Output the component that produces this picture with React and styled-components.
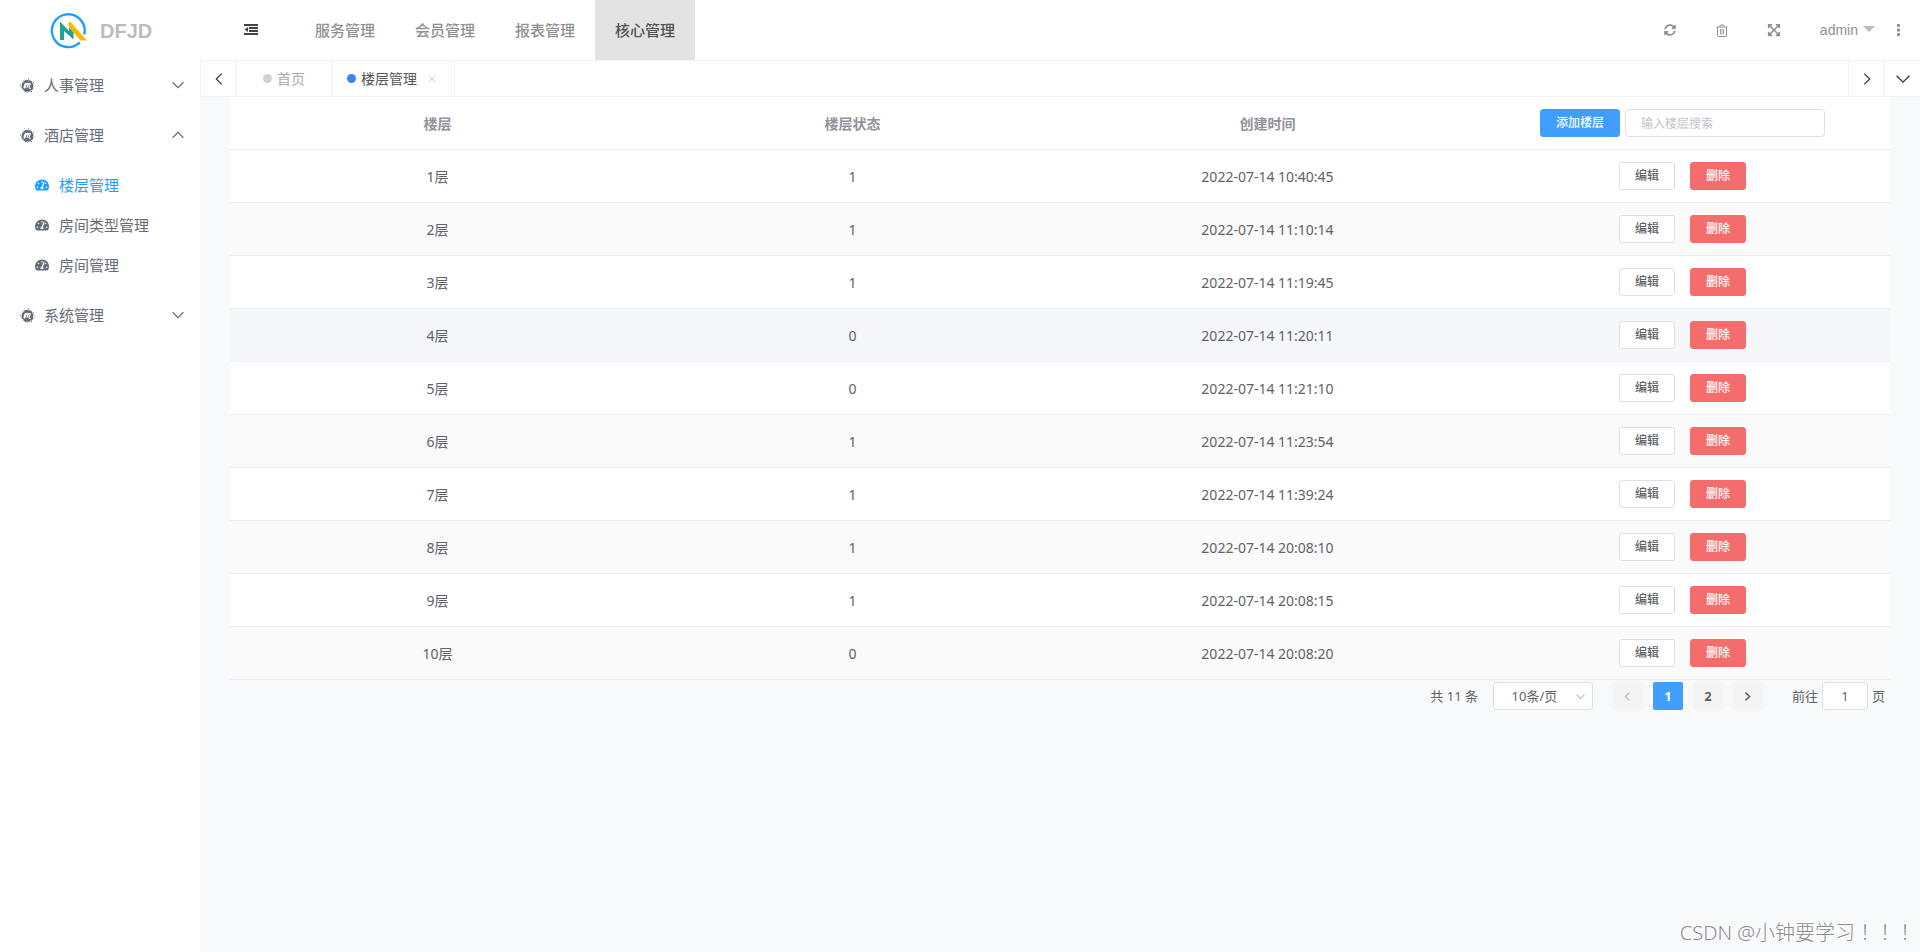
import React, { useState } from 'react';
import styled, { createGlobalStyle, css } from 'styled-components';
import { FaExpandArrowsAlt, FaMeetup, FaSyncAlt, FaTachometerAlt } from 'react-icons/fa';

const navItems = ['服务管理', '会员管理', '报表管理', '核心管理'];

const menus = [
  { title: '人事管理', children: [] },
  { title: '酒店管理', children: ['楼层管理', '房间类型管理', '房间管理'] },
  { title: '系统管理', children: [] },
];

const floors = [
  { id: 1, name: '1层', status: 1, created: '2022-07-14 10:40:45' },
  { id: 2, name: '2层', status: 1, created: '2022-07-14 11:10:14' },
  { id: 3, name: '3层', status: 1, created: '2022-07-14 11:19:45' },
  { id: 4, name: '4层', status: 0, created: '2022-07-14 11:20:11' },
  { id: 5, name: '5层', status: 0, created: '2022-07-14 11:21:10' },
  { id: 6, name: '6层', status: 1, created: '2022-07-14 11:23:54' },
  { id: 7, name: '7层', status: 1, created: '2022-07-14 11:39:24' },
  { id: 8, name: '8层', status: 1, created: '2022-07-14 20:08:10' },
  { id: 9, name: '9层', status: 1, created: '2022-07-14 20:08:15' },
  { id: 10, name: '10层', status: 0, created: '2022-07-14 20:08:20' },
];

export default function App() {
  return (
    <>
      <GlobalStyle />
      <Shell>
        <Sidebar />
        <Main>
          <TopBar />
          <TabBar />
          <Content>
            <FloorTable />
            <Pager />
          </Content>
        </Main>
        <Watermark>CSDN @小钟要学习！！！</Watermark>
      </Shell>
    </>
  );
}

function Sidebar() {
  const [opened, setOpened] = useState('酒店管理');
  const [current, setCurrent] = useState('楼层管理');

  return (
    <Aside>
      <Brand>
        <Logo />
        <BrandName>DFJD</BrandName>
      </Brand>
      <nav>
        {menus.map(({ title, children }) => (
          <div key={title}>
            <MenuTitle
              type="button"
              aria-expanded={opened === title}
              onClick={() => setOpened(opened === title ? '' : title)}
            >
              <FaMeetup size={15} />
              <MenuText>{title}</MenuText>
              <Chevron dir={opened === title ? 'up' : 'down'} width={12} />
            </MenuTitle>
            {opened === title && children.length > 0 && (
              <SubMenu>
                {children.map(child => (
                  <li key={child}>
                    <SubLink
                      href="#"
                      $active={child === current}
                      onClick={() => setCurrent(child)}
                    >
                      <FaTachometerAlt size={14} />
                      {child}
                    </SubLink>
                  </li>
                ))}
              </SubMenu>
            )}
          </div>
        ))}
      </nav>
    </Aside>
  );
}

function TopBar() {
  return (
    <Header>
      <FoldButton type="button" aria-label="折叠菜单">
        <FoldIcon />
      </FoldButton>
      <Nav>
        {navItems.map(item => (
          <NavLink key={item} href="#" $active={item === '核心管理'}>
            {item}
          </NavLink>
        ))}
      </Nav>
      <Tools>
        <ToolButton type="button" aria-label="刷新">
          <FaSyncAlt size={12} />
        </ToolButton>
        <ToolButton type="button" aria-label="清除缓存">
          <TrashIcon />
        </ToolButton>
        <ToolButton type="button" aria-label="全屏">
          <FaExpandArrowsAlt size={14} />
        </ToolButton>
        <UserButton type="button">
          admin
          <UserCaret />
        </UserButton>
        <MoreButton type="button" aria-label="更多">
          <MoreIcon />
        </MoreButton>
      </Tools>
    </Header>
  );
}

function TabBar() {
  return (
    <Tabs>
      <TabArrow type="button" aria-label="向左">
        <Chevron dir="left" width={12} stroke="#333" />
      </TabArrow>
      <Tab>
        <Dot />
        <TabLink href="#">首页</TabLink>
      </Tab>
      <Tab $active>
        <Dot $active />
        <TabLink href="#">楼层管理</TabLink>
        <CloseButton type="button" aria-label="关闭">
          <svg width="8" height="8" viewBox="0 0 8 8" stroke="currentColor">
            <path d="M.5.5l7 7M7.5.5l-7 7" />
          </svg>
        </CloseButton>
      </Tab>
      <TabSpace />
      <TabArrow type="button" aria-label="向右" $right>
        <Chevron dir="right" width={12} stroke="#333" />
      </TabArrow>
      <TabArrow type="button" aria-label="标签操作" $right>
        <Chevron dir="down" width={14} stroke="#333" />
      </TabArrow>
    </Tabs>
  );
}

function FloorTable() {
  return (
    <Table>
      <thead>
        <tr>
          <HeadCell>楼层</HeadCell>
          <HeadCell>楼层状态</HeadCell>
          <HeadCell>创建时间</HeadCell>
          <HeadCell>
            <Actions $gap="5px">
              <Button type="button" $kind="primary">
                添加楼层
              </Button>
              <SearchInput aria-label="输入楼层搜索" placeholder="输入楼层搜索" />
            </Actions>
          </HeadCell>
        </tr>
      </thead>
      <tbody>
        {floors.map(floor => (
          <Row key={floor.id} $current={floor.id === 4}>
            <Cell>{floor.name}</Cell>
            <Cell>{floor.status}</Cell>
            <Cell>{floor.created}</Cell>
            <Cell>
              <Actions $gap="15px">
                <Button type="button">编辑</Button>
                <Button type="button" $kind="danger">
                  删除
                </Button>
              </Actions>
            </Cell>
          </Row>
        ))}
      </tbody>
    </Table>
  );
}

function Pager() {
  const [page, setPage] = useState(1);

  return (
    <Pagination>
      <span>共 11 条</span>
      <SizeBox>
        <SizeSelect aria-label="每页条数" defaultValue="10">
          <option value="10">10条/页</option>
          <option value="20">20条/页</option>
        </SizeSelect>
        <SizeArrow>
          <Chevron dir="down" width={9} stroke="#c0c4cc" />
        </SizeArrow>
      </SizeBox>
      <Pages>
        <PageButton
          type="button"
          aria-label="上一页"
          disabled={page === 1}
          onClick={() => setPage(1)}
        >
          <Chevron dir="left" width={9} weight={1.5} />
        </PageButton>
        {[1, 2].map(n => (
          <PageButton key={n} type="button" $active={n === page} onClick={() => setPage(n)}>
            {n}
          </PageButton>
        ))}
        <PageButton
          type="button"
          aria-label="下一页"
          disabled={page === 2}
          onClick={() => setPage(2)}
        >
          <Chevron dir="right" width={9} weight={1.5} />
        </PageButton>
      </Pages>
      <Jump>
        前往
        <JumpInput defaultValue="1" />
        页
      </Jump>
    </Pagination>
  );
}

const turns = { down: 0, left: 90, up: 180, right: 270 };

function Chevron({ dir, width, stroke = 'currentColor', weight = 1.2 }) {
  return (
    <svg width={width} height={width} viewBox={`0 0 ${width} ${width}`} fill="none" aria-hidden="true">
      <path
        d={`M.6 ${width * 0.27}L${width / 2} ${width * 0.73}L${width - 0.6} ${width * 0.27}`}
        stroke={stroke}
        strokeWidth={weight}
        transform={`rotate(${turns[dir]} ${width / 2} ${width / 2})`}
      />
    </svg>
  );
}

function Logo() {
  return (
    <svg width="38" height="36" viewBox="0 0 38 36" fill="none" aria-hidden="true">
      <path d="M34.2 21.5A16.4 16.4 0 1 0 29.8 29.3" stroke="#1e9fff" strokeWidth="2.4" />
      <path d="M18.500 9h2L37 27.500h-6.500L18.500 14z" fill="#ffb800" />
      <path d="M10 8.500l9 9.500v-3.500l4.500 5v7L14 18v9h-4z" fill="#1fa193" />
    </svg>
  );
}

function FoldIcon() {
  return (
    <svg width="14" height="12" viewBox="0 0 14 12" fill="currentColor" aria-hidden="true">
      <path d="M0 0h14v2H0zM5 3h9v2H5zM5 6h9v2H5zM0 9h14v2H0zM4 3v5L.5 5.500z" />
    </svg>
  );
}

function TrashIcon() {
  return (
    <svg width="12" height="13" viewBox="0 0 12 13" fill="none" stroke="currentColor" aria-hidden="true">
      <path d="M.5 3h11M4 2.800V1.800Q4 1 4.800 1h2.400Q8 1 8 1.800v1M1.500 3v8.500q0 1 1 1h7q1 0 1-1V3" />
      <path d="M4.500 5v5.500M6 5v5.500M7.500 5v5.500" strokeWidth=".8" />
    </svg>
  );
}

function MoreIcon() {
  return (
    <svg width="3" height="12" viewBox="0 0 3 12" fill="currentColor" aria-hidden="true">
      <rect width="3" height="3" rx=".5" />
      <rect y="4.500" width="3" height="3" rx=".5" />
      <rect y="9" width="3" height="3" rx=".5" />
    </svg>
  );
}

const GlobalStyle = createGlobalStyle`
  * {
    box-sizing: border-box;
  }

  body {
    margin: 0;
    background: #f8f9fb;
    color: #606266;
    font: 14px/23px 'Noto Sans', 'Noto Sans CJK SC', sans-serif;
  }

  button,
  input,
  select {
    margin: 0;
    font-family: inherit;
  }

  a {
    color: inherit;
    text-decoration: none;
  }

  svg {
    display: block;
    flex: none;
  }
`;

const plainButton = css`
  display: flex;
  align-items: center;
  justify-content: center;
  padding: 0;
  border: none;
  background: none;
  color: inherit;
  cursor: pointer;
`;

const Shell = styled.div`
  position: relative;
  display: grid;
  grid-template-columns: 200px 1fr;
  min-height: 100vh;
`;

const Aside = styled.aside`
  background: #fff;
  color: #666c76;
`;

const Brand = styled.div`
  display: flex;
  align-items: center;
  gap: 12px;
  height: 60px;
  padding: 2px 0 0 50px;
`;

const BrandName = styled.span`
  color: #bfbbbb;
  font: bold 20px 'Liberation Sans', sans-serif;
`;

const MenuTitle = styled.button`
  ${plainButton}
  width: 100%;
  height: 50px;
  padding: 0 16px 0 20px;
  font-size: 15px;
`;

const MenuText = styled.span`
  flex: 1;
  padding: 0 0 2px 9px;
  text-align: left;
`;

const SubMenu = styled.ul`
  margin: 0;
  padding: 5px 0;
  list-style: none;
`;

const SubLink = styled.a`
  display: flex;
  align-items: center;
  gap: 10px;
  height: 40px;
  padding-left: 35px;
  color: ${props => (props.$active ? '#1e9fff' : 'inherit')};
  font-size: 15px;
`;

const Main = styled.main`
  min-width: 0;
`;

const Header = styled.header`
  display: flex;
  height: 60px;
  background: #fff;
  color: #909090;
`;

const FoldButton = styled.button`
  ${plainButton}
  width: 95px;
  padding-left: 7px;
  color: #444;
`;

const Nav = styled.nav`
  display: flex;
`;

const NavLink = styled.a`
  padding: 0 20px;
  background: ${props => (props.$active ? '#e3e3e3' : 'none')};
  color: ${props => (props.$active ? '#505050' : 'inherit')};
  font-size: 15px;
  font-weight: 500;
  line-height: 60px;
`;

const Tools = styled.div`
  display: flex;
  margin-left: auto;
`;

const ToolButton = styled.button`
  ${plainButton}
  width: 52px;
`;

const UserButton = styled.button`
  ${plainButton}
  gap: 5px;
  padding: 0 1px 0 20px;
  font-family: 'Liberation Sans', sans-serif;
  font-size: 14px;
`;

const UserCaret = styled.span`
  margin-bottom: 2px;
  border: 6px solid transparent;
  border-top-color: #bbb;
  border-bottom-width: 0;
`;

const MoreButton = styled.button`
  ${plainButton}
  width: 44px;
`;

const Tabs = styled.div`
  display: flex;
  height: 37px;
  border: solid #f2f2f2;
  border-width: 1px 0 1px 1px;
  background: #fff;
`;

const TabArrow = styled.button`
  ${plainButton}
  width: 36px;
  border: solid #f2f2f2;
  border-width: ${props => (props.$right ? '0 0 0 1px' : '0 1px 0 0')};
`;

const Tab = styled.div`
  display: flex;
  align-items: center;
  gap: 5px;
  padding: ${props => (props.$active ? '0 18px 0 15px' : '0 26px')};
  border-right: 1px solid #f2f2f2;
  color: ${props => (props.$active ? '#555' : '#aaa')};
`;

const TabLink = styled.a`
  line-height: 34px;
`;

const Dot = styled.span`
  width: 9px;
  height: 9px;
  border-radius: 50%;
  background: ${props => (props.$active ? '#4080ff' : '#d2d2d2')};
`;

const CloseButton = styled.button`
  ${plainButton}
  padding-left: 6px;
  color: #ccc;
`;

const TabSpace = styled.div`
  flex: 1;
`;

const Content = styled.section`
  padding: 0 30px;
`;

const Table = styled.table`
  width: 100%;
  table-layout: fixed;
  border-collapse: separate;
  border-spacing: 0;
  background: #fff;
  text-align: center;
`;

const cell = css`
  height: 53px;
  padding: 12px 10px;
  border-bottom: 1px solid #ebeef5;
`;

const HeadCell = styled.th`
  ${cell}
  color: #909399;
`;

const Cell = styled.td`
  ${cell}
`;

const Row = styled.tr`
  &:nth-child(even) {
    background: ${props => (props.$current ? '#f5f7fa' : '#fafafa')};
  }
`;

const Actions = styled.div`
  display: flex;
  justify-content: center;
  gap: ${props => props.$gap};
`;

const kinds = {
  primary: css`
    border-color: #409eff;
    background: #409eff;
    color: #fff;
  `,
  danger: css`
    border-color: #f56c6c;
    background: #f56c6c;
    color: #fff;
  `,
};

const Button = styled.button`
  height: 28px;
  padding: 0 15px;
  border: 1px solid #dcdfe6;
  border-radius: 3px;
  background: #fff;
  color: #606266;
  font-size: 12px;
  font-weight: 500;
  line-height: 12px;
  cursor: pointer;
  ${props => kinds[props.$kind]}
`;

const field = css`
  height: 28px;
  border: 1px solid #dcdfe6;
  border-radius: 4px;
  background: #fff;
  color: #606266;
  outline: none;
`;

const SearchInput = styled.input`
  ${field}
  width: 200px;
  padding: 0 15px;
  font-size: 12px;

  &::placeholder {
    color: #c0c4cc;
  }
`;

const Pagination = styled.div`
  display: flex;
  align-items: center;
  justify-content: flex-end;
  padding: 2px 5px;
  font-size: 13px;
  line-height: 28px;
`;

const SizeBox = styled.div`
  position: relative;
  display: flex;
  margin: 0 15px;
`;

const SizeSelect = styled.select`
  ${field}
  width: 100px;
  padding: 0 25px 0 8px;
  appearance: none;
  font-size: 13px;
  text-align: center;
  text-align-last: center;
`;

const SizeArrow = styled.span`
  position: absolute;
  top: 10px;
  right: 8px;
  pointer-events: none;
`;

const Pages = styled.div`
  display: flex;
  gap: 10px;
  padding: 0 5px;
`;

const PageButton = styled.button`
  ${plainButton}
  width: 30px;
  height: 28px;
  border-radius: 2px;
  background: ${props => (props.$active ? '#409eff' : '#f4f4f5')};
  color: ${props => (props.$active ? '#fff' : '#606266')};
  font-size: 13px;
  font-weight: bold;

  &:disabled {
    color: #c0c4cc;
  }
`;

const Jump = styled.label`
  display: flex;
  gap: 4px;
  margin-left: 24px;
`;

const JumpInput = styled.input`
  ${field}
  width: 46px;
  padding: 0 3px;
  font-size: 13px;
  text-align: center;
`;

const Watermark = styled.div`
  position: absolute;
  right: 5px;
  bottom: 5px;
  color: #8c8c8c;
  font-family: 'Noto Sans', 'Noto Sans CJK TC', sans-serif;
  font-size: 20px;
  font-weight: 300;
  line-height: 28px;
  text-shadow: -1px -1px 0 #fff;
  pointer-events: none;
`;
